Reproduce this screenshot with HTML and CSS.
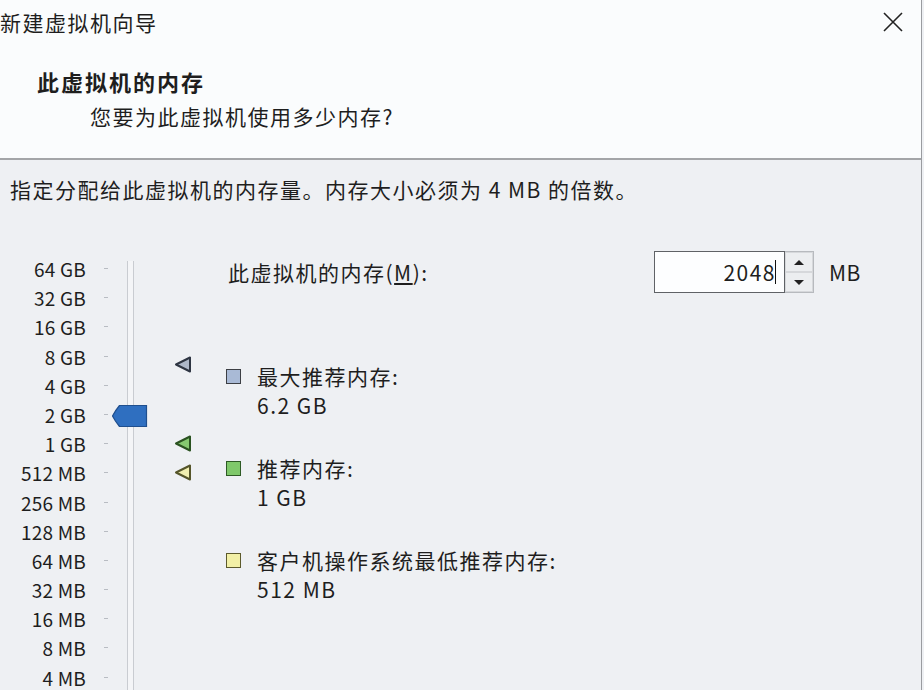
FILE: index.html
```html
<!DOCTYPE html>
<html lang="zh-CN">
<head>
    <meta charset="UTF-8">
    <title>新建虚拟机向导</title>
    <link rel="stylesheet" href="styles.css">
</head>
<body>
    <div class="window">
        <div class="header">
            <div class="titlebar">
                <span class="title">新建虚拟机向导</span>
                <svg class="close" width="22" height="22" viewBox="0 0 22 22">
                    <path d="M2 2 L20 20 M20 2 L2 20" stroke="#222" stroke-width="1.6" fill="none"/>
                </svg>
            </div>
            <h1 class="heading">此虚拟机的内存</h1>
            <p class="subheading">您要为此虚拟机使用多少内存?</p>
        </div>

        <div class="content">
            <p class="desc">指定分配给此虚拟机的内存量。内存大小必须为 4 MB 的倍数。</p>

            <div class="main">
                <div class="scale">
                    <ul class="labels">
                        <li>64 GB</li>
                        <li>32 GB</li>
                        <li>16 GB</li>
                        <li>8 GB</li>
                        <li>4 GB</li>
                        <li>2 GB</li>
                        <li>1 GB</li>
                        <li>512 MB</li>
                        <li>256 MB</li>
                        <li>128 MB</li>
                        <li>64 MB</li>
                        <li>32 MB</li>
                        <li>16 MB</li>
                        <li>8 MB</li>
                        <li>4 MB</li>
                    </ul>
                    <div class="track"></div>
                    <!-- 滑块和推荐标记，位置按数值计算 -->
                    <svg class="thumb" style="top: 150px" width="37" height="24" viewBox="0 0 37 24">
                        <path d="M1.5 12 Q4 7 8.5 1.5 H35.5 V22.5 H8.5 Q4 17 1.5 12 Z" fill="#2f6fc0" stroke="#1f4f8e" stroke-width="1.2"/>
                    </svg>
                    <svg class="mark" style="top: 102px" width="18" height="17" viewBox="0 0 18 17">
                        <path d="M2 8.5 L16 1.5 V15.5 Z" fill="#aeb8c9" stroke="#2e3542" stroke-width="2" stroke-linejoin="round"/>
                    </svg>
                    <svg class="mark" style="top: 181px" width="18" height="17" viewBox="0 0 18 17">
                        <path d="M2 8.5 L16 1.5 V15.5 Z" fill="#86c970" stroke="#2a5220" stroke-width="2" stroke-linejoin="round"/>
                    </svg>
                    <svg class="mark" style="top: 210px" width="18" height="17" viewBox="0 0 18 17">
                        <path d="M2 8.5 L16 1.5 V15.5 Z" fill="#f1efb0" stroke="#55552a" stroke-width="2" stroke-linejoin="round"/>
                    </svg>
                </div>

                <div class="info">
                    <div class="size-row">
                        <label class="size-label" for="mem">此虚拟机的内存(<u>M</u>):</label>
                        <div class="spin">
                            <div class="spin-input"><span id="mem">2048</span><span class="caret"></span></div>
                            <div class="spin-buttons">
                                <div class="spin-btn"><span class="arrow up"></span></div>
                                <div class="spin-btn"><span class="arrow down"></span></div>
                            </div>
                        </div>
                        <span class="unit">MB</span>
                    </div>

                    <div class="item">
                        <span class="swatch blue"></span>
                        <div>
                            <div>最大推荐内存:</div>
                            <div>6.2 GB</div>
                        </div>
                    </div>
                    <div class="item">
                        <span class="swatch green"></span>
                        <div>
                            <div>推荐内存:</div>
                            <div>1 GB</div>
                        </div>
                    </div>
                    <div class="item">
                        <span class="swatch yellow"></span>
                        <div>
                            <div>客户机操作系统最低推荐内存:</div>
                            <div>512 MB</div>
                        </div>
                    </div>
                </div>
            </div>
        </div>
    </div>
</body>
</html>
```

FILE: styles.css
```css
body {
    margin: 0;
    font-family: "Noto Sans CJK SC", "Noto Sans", sans-serif;
    font-size: 21px;
    letter-spacing: 1.5px;
    color: #1e1e1e;
    background: #eef0f3;
    overflow: hidden;
}
.window {
    width: 921px;
    height: 690px;
    border-right: 1px solid #9a9ca0;
    background: #eef0f3;
}
.header {
    height: 160px;
    background: #fafcfd;
    border-bottom: 2px solid #a3a5a8;
    box-sizing: border-box;
}
.titlebar {
    height: 47px;
    display: flex;
    align-items: center;
    justify-content: space-between;
}
.title {
    margin-top: -4px;
}
.close {
    margin-right: 17px;
    margin-top: -4px;
}
.heading {
    margin: 17px 0 0 37px;
    font-size: 22px;
    letter-spacing: 2px;
    font-weight: bold;
    line-height: 34px;
}
.subheading {
    margin: 3px 0 0 90px;
    line-height: 30px;
}
.desc {
    margin: 0;
    padding: 14px 0 0 10px;
    line-height: 30px;
}
.main {
    display: flex;
    margin-top: 50px;
}
.scale {
    position: relative;
    width: 226px;
    flex-shrink: 0;
}
.labels {
    list-style: none;
    margin: 0;
    padding: 0;
    width: 110px;
}
.labels li {
    height: 29.2px;
    line-height: 29.2px;
    font-size: 19px;
    letter-spacing: 0.2px;
    text-align: right;
    padding-right: 24px;
    position: relative;
}
.labels li::after {
    content: "";
    position: absolute;
    right: 2px;
    top: 14px;
    width: 4px;
    height: 1px;
    background: #b8bcc2;
}
.track {
    position: absolute;
    left: 127px;
    top: 7px;
    width: 5px;
    height: 460px;
    background: #f4f5f7;
    border-left: 1px solid #c9ccd1;
    border-right: 1px solid #c9ccd1;
}
.thumb {
    position: absolute;
    left: 111px;
}
.mark {
    position: absolute;
    left: 174px;
}
.info {
    flex: 1;
    padding-right: 62px;
}
.size-row {
    display: flex;
    align-items: center;
    margin-top: -3px;
    height: 42px;
}
.size-label {
    flex: 1;
    padding-left: 2px;
}
.spin {
    display: flex;
    height: 42px;
}
.spin-input {
    width: 121px;
    height: 40px;
    border: 1px solid #5f6266;
    background: #fdfeff;
    display: flex;
    align-items: center;
    justify-content: flex-end;
    padding-right: 8px;
}
.caret {
    width: 1px;
    height: 24px;
    background: #111;
    margin-left: -1px;
}
.spin-buttons {
    display: flex;
    flex-direction: column;
    width: 29px;
    height: 42px;
    border: 1px solid #b7babe;
    border-left: none;
    box-sizing: border-box;
}
.spin-btn {
    flex: 1;
    display: flex;
    align-items: center;
    justify-content: center;
    background: #eceef0;
    border: 1px solid #d6d8db;
}
.arrow {
    width: 0;
    height: 0;
    border-left: 5px solid transparent;
    border-right: 5px solid transparent;
}
.arrow.up {
    border-bottom: 5px solid #222;
}
.arrow.down {
    border-top: 5px solid #222;
}
.unit {
    margin-left: 15px;
    width: 30px;
    letter-spacing: 0.5px;
}
.item {
    display: flex;
    gap: 16px;
    line-height: 29px;
    margin-top: 34px;
}
.size-row + .item {
    margin-top: 69px;
}
.swatch {
    width: 13px;
    height: 13px;
    margin-top: 7px;
    border: 1px solid #3c3f44;
    flex-shrink: 0;
}
.swatch.blue {
    background: #a9bad6;
}
.swatch.green {
    background: #7fc86a;
    border-color: #2e5a25;
}
.swatch.yellow {
    background: #f2f0a6;
    border-color: #5c5a2c;
}
```
